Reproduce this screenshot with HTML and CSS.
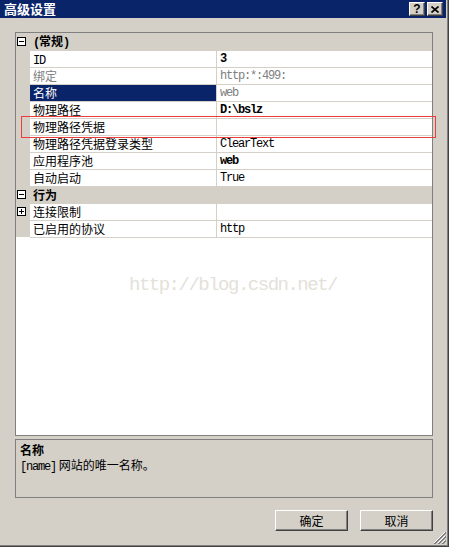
FILE: index.html
```html
<!DOCTYPE html>
<html lang="zh-CN">
<head>
  <meta charset="UTF-8">
  <title>高级设置</title>
  <link rel="stylesheet" href="styles.css">
</head>
<body>
  <div class="window">
    <div class="frame">
      <div class="titlebar">
        <span class="title">高级设置</span>
        <div class="caption-buttons">
          <span class="cap-btn help">?</span>
          <span class="cap-btn close">
            <svg width="8" height="7" viewBox="0 0 8 7">
              <path d="M0.5 0.5 L7.5 6.5 M7.5 0.5 L0.5 6.5" stroke="#000" stroke-width="1.6" fill="none"/>
            </svg>
          </span>
        </div>
      </div>

      <div class="main">
        <div class="grid">
          <div class="rows">
            <div class="cat"><span class="toggle"></span><span class="cat-label"><span class="en">(</span>常规<span class="en">)</span></span></div>

            <div class="margin"></div>
            <div class="name"><span class="en">ID</span></div>
            <div class="value en strong">3</div>

            <div class="margin"></div>
            <div class="name muted">绑定</div>
            <div class="value en muted">http:*:499:</div>

            <div class="margin"></div>
            <div class="name selected">名称</div>
            <div class="value en muted">web</div>

            <div class="margin"></div>
            <div class="name">物理路径</div>
            <div class="value en strong">D:\bslz</div>

            <div class="margin"></div>
            <div class="name">物理路径凭据</div>
            <div class="value"></div>

            <div class="margin"></div>
            <div class="name">物理路径凭据登录类型</div>
            <div class="value en">ClearText</div>

            <div class="margin"></div>
            <div class="name">应用程序池</div>
            <div class="value en strong">web</div>

            <div class="margin"></div>
            <div class="name">自动启动</div>
            <div class="value en">True</div>

            <div class="cat"><span class="toggle"></span><span class="cat-label">行为</span></div>

            <div class="margin"><span class="toggle plus"></span></div>
            <div class="name">连接限制</div>
            <div class="value"></div>

            <div class="margin"></div>
            <div class="name last">已启用的协议</div>
            <div class="value en last">http</div>
          </div>

          <div class="watermark">http://blog.csdn.net/</div>
          <div class="callout"></div>
        </div>

        <div class="desc">
          <div class="desc-title">名称</div>
          <div class="desc-text"><span class="en">[name]</span> 网站的唯一名称。</div>
        </div>

        <div class="actions">
          <button class="btn">确定</button>
          <button class="btn">取消</button>
        </div>
      </div>

      <svg class="grip" width="12" height="12" viewBox="0 0 12 12" shape-rendering="crispEdges">
        <path d="M11 0 L0 11 M11 4 L4 11 M11 8 L8 11" stroke="#fff" stroke-width="1" fill="none"/>
        <path d="M12 0 L0 12 M12 1 L1 12 M12 4 L4 12 M12 5 L5 12 M12 8 L8 12 M12 9 L9 12" stroke="#808080" stroke-width="1" fill="none"/>
      </svg>
    </div>
  </div>
</body>
</html>
```

FILE: styles.css
```css
/* classic dialog look */
body {
  margin: 0;
  padding: 0;
  font-family: "Noto Sans CJK SC", sans-serif;
  font-size: 12px;
  color: #000;
  background: #d4d0c8;
}

.en {
  font-family: "Liberation Mono", monospace;
  letter-spacing: -1.2px;
}

.window {
  width: 449px;
  height: 547px;
  box-sizing: border-box;
  border-right: 1px solid #404040;
  border-bottom: 1px solid #404040;
}

.frame {
  position: relative;
  height: 100%;
  box-sizing: border-box;
  border-right: 1px solid #808080;
  border-bottom: 1px solid #808080;
  padding: 0 1px 1px 0;
  background: #d4d0c8;
  display: flex;
  flex-direction: column;
}

.titlebar {
  height: 18px;
  background: #0a246a;
  display: flex;
  align-items: center;
  justify-content: space-between;
  padding: 0 3px 0 4px;
}

.title {
  color: #fff;
  font-weight: 700;
  font-size: 13px;
  line-height: 18px;
}

.caption-buttons {
  display: flex;
  gap: 2px;
}

.cap-btn {
  width: 16px;
  height: 14px;
  box-sizing: border-box;
  background: #d4d0c8;
  border: 1px solid;
  border-color: #fff #404040 #404040 #fff;
  box-shadow: inset -1px -1px #808080;
  display: flex;
  align-items: center;
  justify-content: center;
}

.help {
  font-family: "Liberation Sans", sans-serif;
  font-weight: 700;
  font-size: 12px;
  line-height: 12px;
}

.main {
  flex: 1;
  display: flex;
  flex-direction: column;
  padding: 14px 13px 13px 15px;
}

.grid {
  position: relative;
  flex: 1;
  background: #fff;
  border: 1px solid #808080;
}

.rows {
  display: grid;
  grid-template-columns: 14px 187px 1fr;
}

.cat {
  grid-column: 1 / -1;
  height: 17px;
  background: #d4d0c8;
  display: flex;
  align-items: center;
  padding-left: 1px;
}

.cat-label {
  font-weight: 700;
  margin-left: 7px;
  line-height: 16px;
}

.toggle {
  position: relative;
  display: block;
  width: 9px;
  height: 9px;
  box-sizing: border-box;
  border: 1px solid #000;
  background: #fff;
}

.toggle::before {
  content: "";
  position: absolute;
  left: 1px;
  top: 3px;
  width: 5px;
  height: 1px;
  background: #000;
}

.toggle.plus::after {
  content: "";
  position: absolute;
  left: 3px;
  top: 1px;
  width: 1px;
  height: 5px;
  background: #000;
}

.margin {
  background: #d4d0c8;
  height: 17px;
  display: flex;
  align-items: center;
  padding-left: 1px;
}

.name,
.value {
  height: 17px;
  box-sizing: border-box;
  border-top: 1px solid #d4d0c8;
  line-height: 16px;
  white-space: nowrap;
}

.name {
  border-right: 1px solid #d4d0c8;
  padding-left: 3px;
}

.value {
  padding-left: 3px;
}

.name.last,
.value.last {
  height: 18px;
  border-bottom: 1px solid #d4d0c8;
}

.selected {
  background: #0a246a;
  color: #fff;
}

.muted {
  color: #808080;
}

.strong {
  font-weight: 700;
}

.watermark {
  position: absolute;
  left: 113px;
  top: 243px;
  font-family: "Liberation Mono", monospace;
  font-size: 19px;
  letter-spacing: -1.5px;
  line-height: 19px;
  color: #e4e1da;
  white-space: nowrap;
}

.callout {
  position: absolute;
  left: 5px;
  top: 83px;
  width: 415px;
  height: 22px;
  box-sizing: border-box;
  border: 1px solid #ee3b3b;
}

.desc {
  margin-top: 3px;
  height: 59px;
  box-sizing: border-box;
  border: 1px solid #808080;
  padding: 2px 4px;
  line-height: 15px;
}

.desc-title {
  font-weight: 700;
}

.actions {
  display: flex;
  justify-content: flex-end;
  gap: 12px;
  margin-top: 12px;
}

.btn {
  width: 73px;
  height: 21px;
  box-sizing: border-box;
  margin: 0;
  padding: 0;
  font: inherit;
  line-height: 17px;
  color: #000;
  background: #d4d0c8;
  border: 1px solid;
  border-color: #fff #404040 #404040 #fff;
  box-shadow: inset -1px -1px #808080;
}

.grip {
  position: absolute;
  right: 1px;
  bottom: 1px;
}
```
